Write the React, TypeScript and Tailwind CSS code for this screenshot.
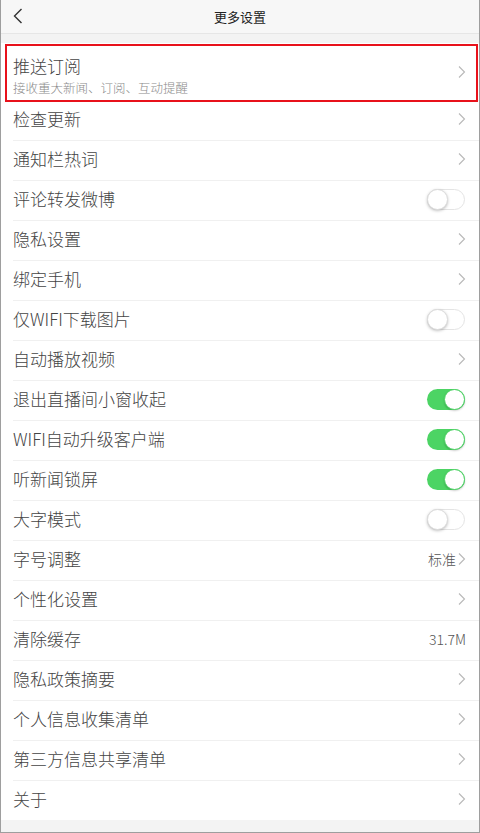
import React from "react";

type Row = {
  label: string;
  kind: "arrow" | "toggle" | "value";
  on?: boolean;
  value?: string;
  arrow?: boolean;
};

const rows: Row[] = [
  { label: "检查更新", kind: "arrow" },
  { label: "通知栏热词", kind: "arrow" },
  { label: "评论转发微博", kind: "toggle", on: false },
  { label: "隐私设置", kind: "arrow" },
  { label: "绑定手机", kind: "arrow" },
  { label: "仅WIFI下载图片", kind: "toggle", on: false },
  { label: "自动播放视频", kind: "arrow" },
  { label: "退出直播间小窗收起", kind: "toggle", on: true },
  { label: "WIFI自动升级客户端", kind: "toggle", on: true },
  { label: "听新闻锁屏", kind: "toggle", on: true },
  { label: "大字模式", kind: "toggle", on: false },
  { label: "字号调整", kind: "value", value: "标准", arrow: true },
  { label: "个性化设置", kind: "arrow" },
  { label: "清除缓存", kind: "value", value: "31.7M" },
  { label: "隐私政策摘要", kind: "arrow" },
  { label: "个人信息收集清单", kind: "arrow" },
  { label: "第三方信息共享清单", kind: "arrow" },
  { label: "关于", kind: "arrow" },
];

function Chevron() {
  return (
    <svg width="8" height="14" viewBox="0 0 8 14" className="shrink-0">
      <polyline points="1,1.5 6.5,7 1,12.5" fill="none" stroke="#b8b8b8" strokeWidth="1.1" />
    </svg>
  );
}

function Toggle({ on }: { on?: boolean }) {
  return on ? (
    <div className="relative w-[38px] h-[21px] rounded-full bg-[#4cd464]">
      <div className="absolute right-0 top-0 w-[21px] h-[21px] rounded-full bg-white border border-[#4cd464] shadow-[0_1px_2px_rgba(0,0,0,0.2)]" />
    </div>
  ) : (
    <div className="relative w-[38px] h-[21px] rounded-full bg-white border border-[#e4e4e4]">
      <div className="absolute -left-px -top-px w-[21px] h-[21px] rounded-full bg-white border border-[#dcdcdc] shadow-[0_1px_3px_rgba(0,0,0,0.25)]" />
    </div>
  );
}

export default function App() {
  return (
    <div
      className="relative w-[480px] h-[833px] bg-[#f3f3f3] border-x border-b border-[#9e9e9e] overflow-hidden flex flex-col font-light"
      style={{ fontFamily: '"Noto Sans CJK SC", "Noto Sans", sans-serif' }}
    >
      <div className="h-[34px] shrink-0 bg-[#f7f7f7] border-b border-[#e6e6e6] relative flex items-center justify-center">
        <svg width="10" height="16" viewBox="0 0 10 16" className="absolute left-[12px] top-[8px]">
          <polyline points="8.5,1 1.5,8 8.5,15" fill="none" stroke="#333" strokeWidth="1.4" />
        </svg>
        <span className="text-[13px] text-[#222] font-normal">更多设置</span>
      </div>

      <div className="h-[9px] shrink-0" />

      <div className="bg-white flex flex-col">
        <div className="h-[57px] pl-[12px] pr-[13px] flex items-center justify-between">
          <div className="flex flex-col pt-[8px]">
            <span className="text-[17px] leading-[24px] text-[#444]">推送订阅</span>
            <span className="text-[12.5px] leading-[20px] text-[#8a8a8a]">接收重大新闻、订阅、互动提醒</span>
          </div>
          <Chevron />
        </div>
        {rows.map((row) => (
          <div key={row.label} className="h-[40px] pl-[12px] flex">
            <div className="flex-1 flex items-center justify-between pr-[13px] border-t border-[#f0f0f0] pb-[3px]">
              <span className="text-[17px] text-[#444]">{row.label}</span>
              {row.kind === "arrow" && <Chevron />}
              {row.kind === "toggle" && (
                <div className="mr-px">
                  <Toggle on={row.on} />
                </div>
              )}
              {row.kind === "value" && (
                <div className="flex items-center gap-[2px]">
                  <span className="text-[14px] text-[#555]">{row.value}</span>
                  {row.arrow && <Chevron />}
                </div>
              )}
            </div>
          </div>
        ))}
      </div>

      <div className="absolute left-[4px] top-[44px] w-[473px] h-[58px] border-2 border-[#e8111b]" />
    </div>
  );
}
